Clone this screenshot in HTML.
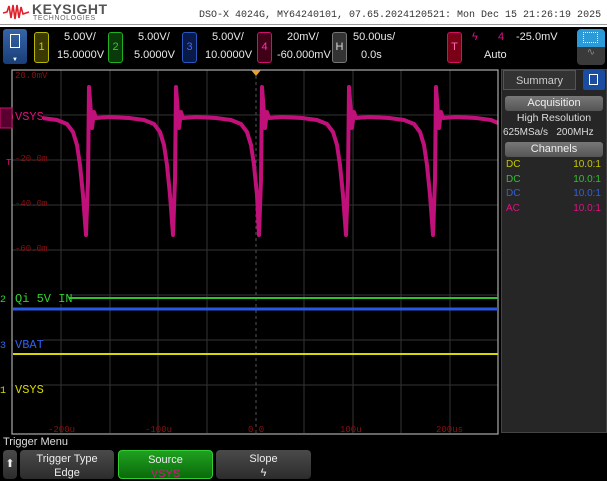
<!DOCTYPE html>
<html><head><meta charset="utf-8"><style>
*{margin:0;padding:0;box-sizing:border-box}
body{width:607px;height:480px;background:#000;position:relative;overflow:hidden;font-family:"Liberation Sans",sans-serif;color:#ddd}
.a{position:absolute}
.t{font-size:11px;color:#e8e8e8;white-space:nowrap}
.m{font-family:"Liberation Mono",monospace}
.chb{position:absolute;top:32px;width:15px;height:31px;border:1px solid;border-radius:3px;font-size:11px;text-align:center;line-height:29px}
.btn{position:absolute;top:450px;height:29px;border-radius:4px;background:linear-gradient(#4a4a4a,#2c2c2c);font-size:11px;text-align:center;color:#eee;line-height:14px;padding-top:2px}
.gb{position:absolute;left:505px;width:98px;height:15px;border-radius:3px;background:linear-gradient(#777,#555);font-size:11px;text-align:center;line-height:15px;color:#eee}
.row{position:absolute;left:506px;width:95px;font-size:10px}
.row span{float:right}
</style></head><body>
<div class="a" style="left:0;top:0;width:607px;height:27px;background:#fff"></div>
<svg class="a" style="left:2px;top:2px" width="28" height="20" viewBox="0 0 28 20"><path d="M1 11 L5 10 L7 4 L9 16 L11 3 L13 17 L15 3 L17 16 L19 5 L21 12 L27 10" fill="none" stroke="#e0202a" stroke-width="1.6"/></svg>
<div class="a" style="left:32px;top:1px;font-size:14px;font-weight:bold;color:#555;letter-spacing:0.5px">KEYSIGHT</div>
<div class="a" style="left:33px;top:15px;font-size:7px;color:#666;letter-spacing:0.6px">TECHNOLOGIES</div>
<div class="a m" style="left:199px;top:10px;font-size:10px;color:#333;white-space:nowrap">DSO-X 4024G, MY64240101, 07.65.2024120521: Mon Dec 15 21:26:19 2025</div>
<div class="a" style="left:0;top:24px;width:607px;height:1px;background:#999"></div>

<div class="a" style="left:3px;top:29px;width:24px;height:35px;border-radius:3px;background:linear-gradient(#3565a8,#1a3e78)"></div>
<div class="a" style="left:10px;top:34px;width:10px;height:14px;border:1px solid #fff"></div>
<div class="a" style="left:12px;top:57px;font-size:6px;color:#fff">▼</div>
<div class="chb" style="left:34px;border-color:#b8b800;background:#3a3a00;color:#cc0">1</div>
<div class="a t" style="left:64px;top:31px">5.00V/</div><div class="a t" style="left:57px;top:49px">15.0000V</div>
<div class="chb" style="left:108px;border-color:#20b020;background:#0a3a0a;color:#3c3">2</div>
<div class="a t" style="left:138px;top:31px">5.00V/</div><div class="a t" style="left:134px;top:49px">5.0000V</div>
<div class="chb" style="left:182px;border-color:#2858c0;background:#0a1a48;color:#46f">3</div>
<div class="a t" style="left:212px;top:31px">5.00V/</div><div class="a t" style="left:205px;top:49px">10.0000V</div>
<div class="chb" style="left:257px;border-color:#d01070;background:#400018;color:#f3a">4</div>
<div class="a t" style="left:287px;top:31px">20mV/</div><div class="a t" style="left:277px;top:49px">-60.000mV</div>
<div class="chb" style="left:332px;border-color:#777;background:#333;color:#ddd">H</div>
<div class="a t" style="left:353px;top:31px">50.00us/</div><div class="a t" style="left:361px;top:49px">0.0s</div>
<div class="chb" style="left:447px;border-color:#d01060;background:#7a0018;color:#f6a">T</div>
<div class="a t" style="left:472px;top:31px;color:#e0108a">ϟ</div>
<div class="a t" style="left:498px;top:31px;color:#e0108a">4</div>
<div class="a t" style="left:516px;top:31px">-25.0mV</div>
<div class="a t" style="left:484px;top:49px">Auto</div>
<div class="a" style="left:577px;top:29px;width:28px;height:18px;border-radius:4px 4px 0 0;background:#2d9ad8"></div>
<div class="a" style="left:583px;top:32px;width:15px;height:11px;border:1px dotted #fff"></div>
<div class="a" style="left:577px;top:47px;width:28px;height:18px;border-radius:0 0 4px 4px;background:#3a3a3a;color:#888;font-size:10px;text-align:center">∿</div>

<svg class="a" style="left:0;top:68px" width="500" height="370">
<g stroke="#333" stroke-width="1">
<line x1="12" y1="47" x2="498" y2="47"/><line x1="12" y1="92" x2="498" y2="92"/><line x1="12" y1="137" x2="498" y2="137"/><line x1="12" y1="182" x2="498" y2="182"/><line x1="12" y1="227" x2="498" y2="227"/><line x1="12" y1="272" x2="498" y2="272"/><line x1="12" y1="317" x2="498" y2="317"/>
<line x1="61" y1="2" x2="61" y2="365"/><line x1="110" y1="2" x2="110" y2="365"/><line x1="158" y1="2" x2="158" y2="365"/><line x1="207" y1="2" x2="207" y2="365"/><line x1="304" y1="2" x2="304" y2="365"/><line x1="353" y1="2" x2="353" y2="365"/><line x1="401" y1="2" x2="401" y2="365"/><line x1="450" y1="2" x2="450" y2="365"/>
</g>
<line x1="256" y1="2" x2="256" y2="365" stroke="#555" stroke-dasharray="3,3"/>
<polygon points="251,2 261,2 256,8" fill="#f0a020"/>
<g font-family="Liberation Mono,monospace" font-size="9" fill="#8a1010">
<text x="15" y="10">20.0mV</text><text x="15" y="93">-20.0m</text><text x="15" y="138">-40.0m</text><text x="15" y="183">-60.0m</text>
<text x="48" y="364">-200u</text><text x="145" y="364">-100u</text><text x="248" y="364">0.0</text><text x="340" y="364">100u</text><text x="436" y="364">200us</text>
</g>
<path d="M12 49 L22 49 L42 50 L57 52 L67 56 L73 64 L77 77 L80 97 L83 127 L86 167 L88 112 L89 19 L90 32 L92 60 L94 44 L96 50 L109 49 L129 50 L144 52 L154 56 L160 64 L164 77 L167 97 L170 127 L173 167 L175 112 L176 19 L177 32 L179 60 L181 44 L183 50 L196 49 L216 50 L231 52 L241 56 L247 64 L251 77 L254 97 L257 127 L259 167 L261 112 L262 19 L263 32 L265 60 L267 44 L269 50 L282 49 L302 50 L317 52 L327 56 L333 64 L337 77 L340 97 L343 127 L346 167 L348 112 L349 19 L350 32 L352 60 L354 44 L356 50 L369 49 L389 50 L404 52 L414 56 L420 64 L424 77 L427 97 L430 127 L433 167 L435 112 L436 19 L437 32 L439 60 L441 44 L443 50 L456 49 L476 50 L491 52 L498 55" fill="none" stroke="#c0107a" stroke-width="4" stroke-linejoin="round"/>
<rect x="12" y="2" width="486" height="364" fill="none" stroke="#aaa" stroke-width="1.2"/>
<line x1="13" y1="230" x2="498" y2="230" stroke="#30c030" stroke-width="2"/>
<line x1="13" y1="241" x2="498" y2="241" stroke="#2858e0" stroke-width="3"/>
<line x1="13" y1="286" x2="498" y2="286" stroke="#d8d800" stroke-width="2"/>
<rect x="13" y="222" width="56" height="14" fill="#000"/>
<rect x="13" y="268" width="30" height="14" fill="#000"/>
<rect x="13" y="313" width="30" height="14" fill="#000"/>
<rect x="0" y="40" width="12" height="20" fill="#5a0030" stroke="#d01070"/>
<rect x="13" y="41" width="30" height="14" fill="#000"/>
<g font-family="Liberation Mono,monospace" font-size="12">
<text x="15" y="52" fill="#e01080">VSYS</text>
<text x="15" y="234" fill="#30d030">Qi 5V IN</text>
<text x="15" y="280" fill="#3060f0">VBAT</text>
<text x="15" y="325" fill="#d8d800">VSYS</text>
<text x="0" y="234" font-size="10" fill="#30d030">2</text>
<text x="0" y="280" font-size="10" fill="#3060f0">3</text>
<text x="0" y="325" font-size="10" fill="#d8d800">1</text>
<text x="6" y="97" font-size="9" fill="#e01080">T</text>
</g>
</svg>

<div class="a" style="left:501px;top:69px;width:106px;height:364px;background:#262626;border:1px solid #444"></div>
<div class="a" style="left:503px;top:70px;width:73px;height:20px;background:#333;border:1px solid #555;font-size:11px;text-align:center;line-height:20px;color:#ccc">Summary</div>
<div class="a" style="left:583px;top:70px;width:22px;height:20px;background:#1a4da0;border-radius:2px"></div>
<div class="a" style="left:589px;top:74px;width:9px;height:11px;border:1px solid #fff"></div>
<div class="gb" style="top:96px">Acquisition</div>
<div class="a" style="left:505px;top:112px;width:98px;font-size:10.5px;text-align:center">High Resolution</div>
<div class="a" style="left:503px;top:127px;font-size:10px">625MSa/s&nbsp;&nbsp;&nbsp;200MHz</div>
<div class="gb" style="top:142px">Channels</div>
<div class="row" style="top:159px;color:#c8c800">DC<span>10.0:1</span></div>
<div class="row" style="top:174px;color:#30c030">DC<span>10.0:1</span></div>
<div class="row" style="top:188px;color:#3060e0">DC<span>10.0:1</span></div>
<div class="row" style="top:203px;color:#e01080">AC<span>10.0:1</span></div>

<div class="a" style="left:3px;top:436px;font-size:11px;color:#ddd">Trigger Menu</div>
<div class="btn" style="left:3px;width:14px;line-height:24px">⬆</div>
<div class="btn" style="left:20px;width:94px">Trigger Type<br>Edge</div>
<div class="btn" style="left:118px;width:95px;background:linear-gradient(#20a020,#0a6a0a);border:1px solid #3c3">Source<br><span style="color:#e0108a">VSYS</span></div>
<div class="btn" style="left:216px;width:95px">Slope<br>ϟ</div>
</body></html>
